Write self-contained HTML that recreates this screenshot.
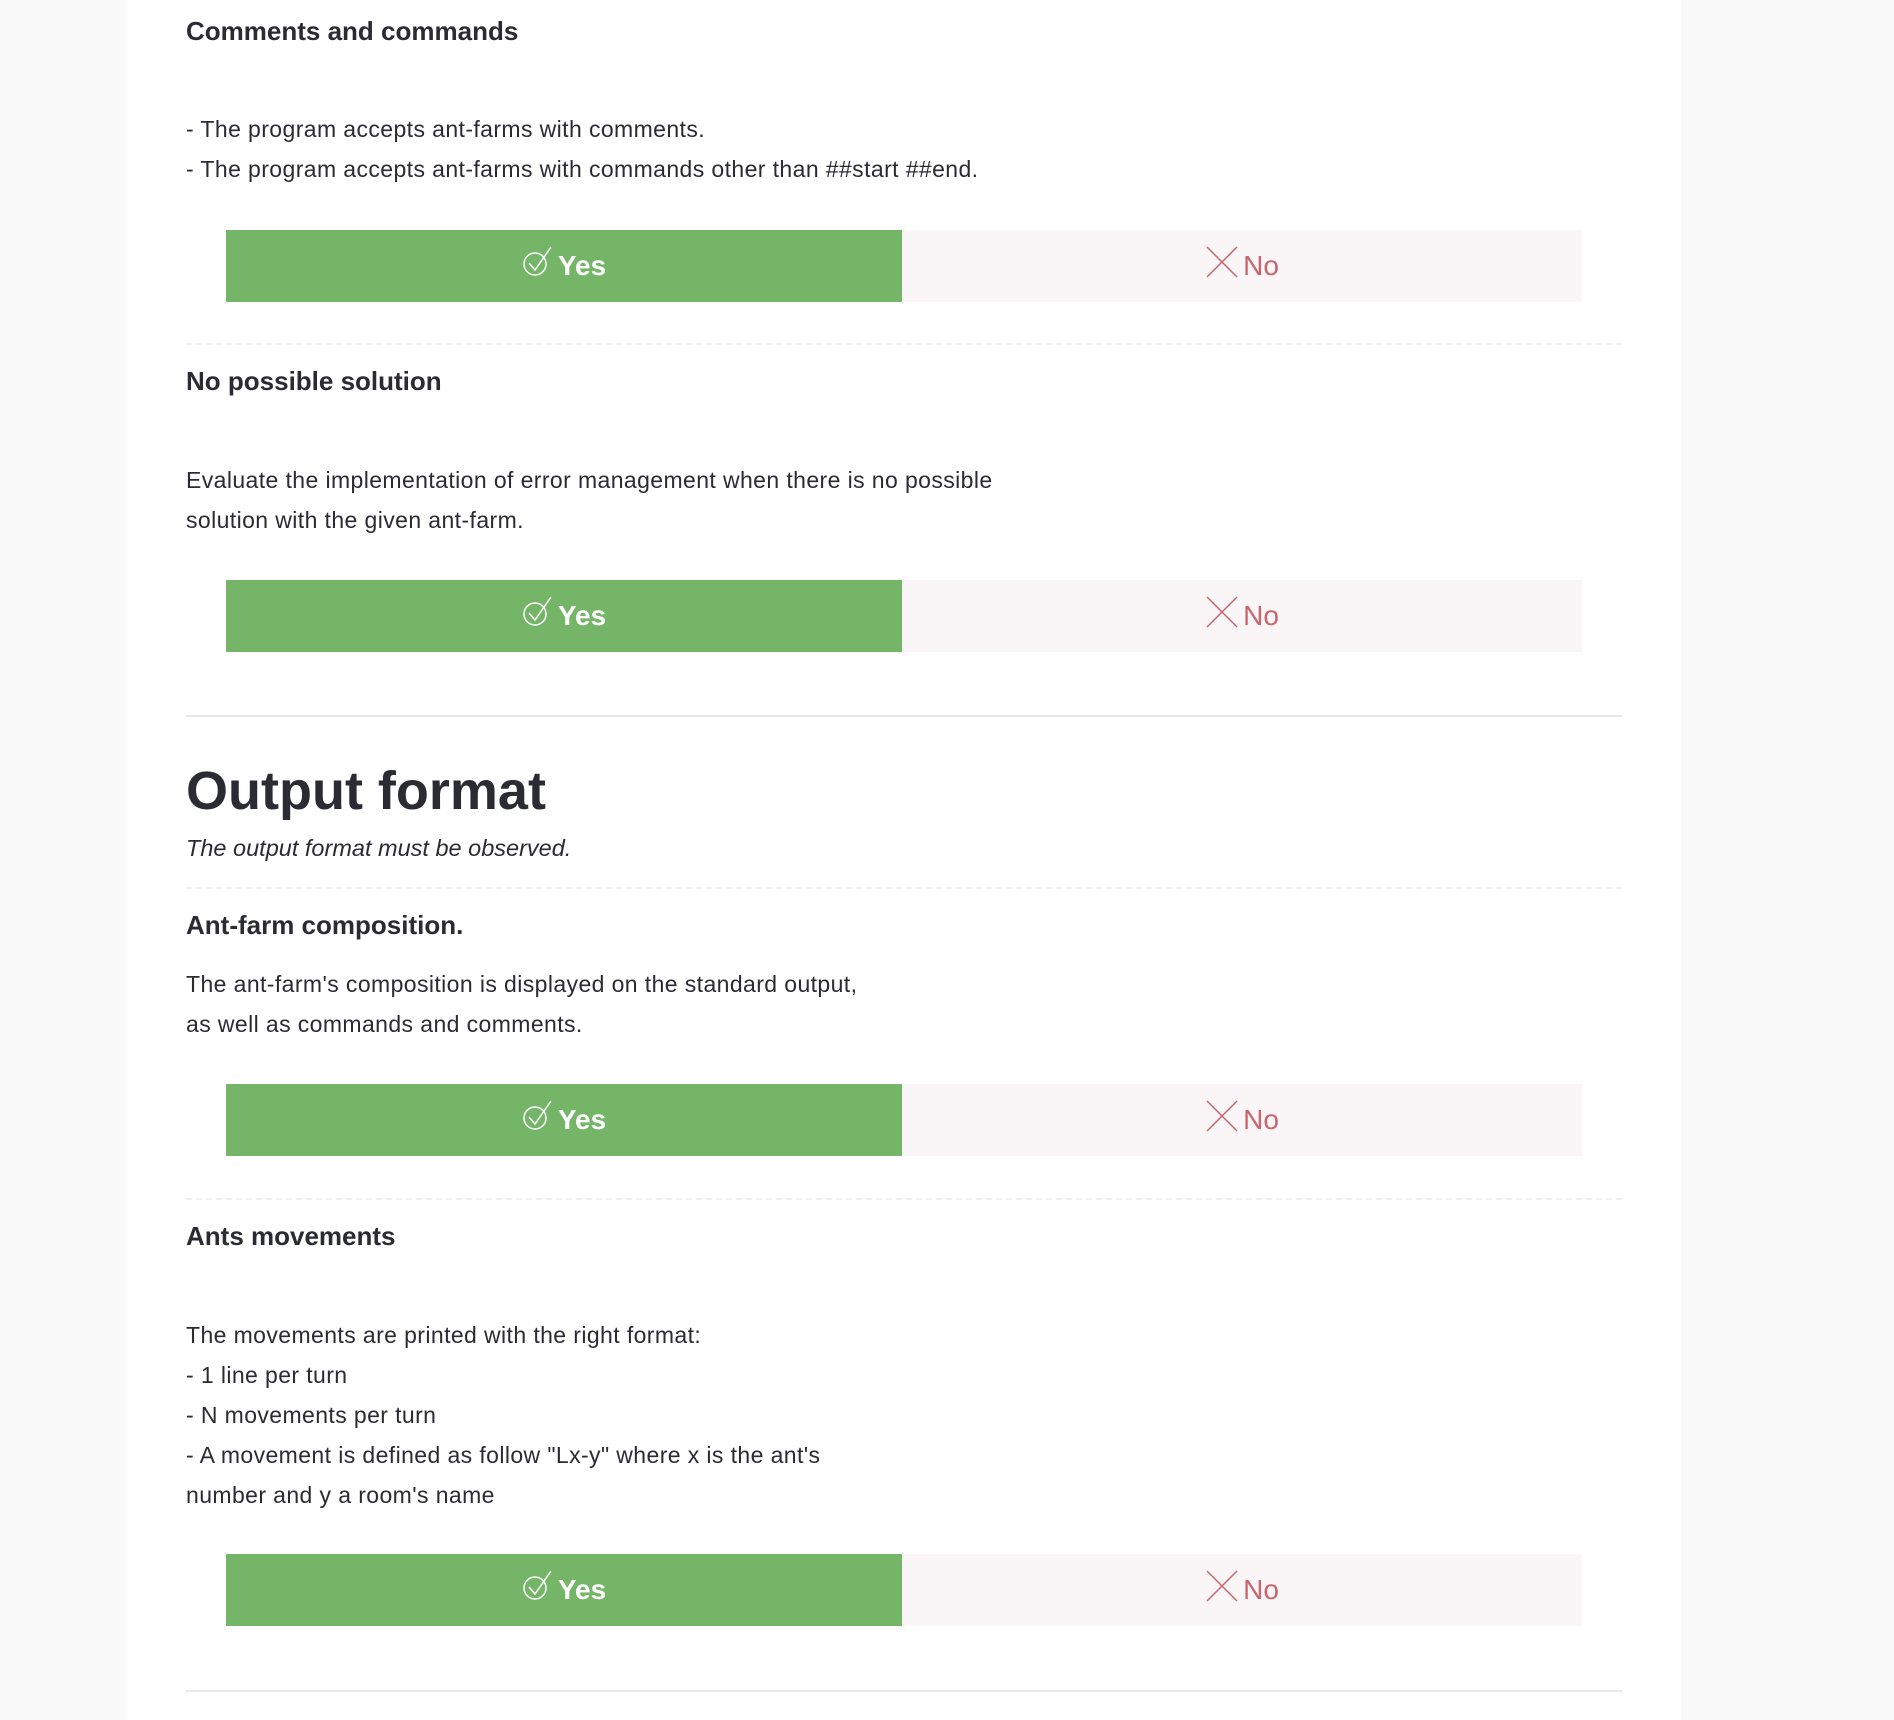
<!DOCTYPE html>
<html><head><meta charset="utf-8"><style>
html,body{margin:0;padding:0}
body{width:1894px;height:1720px;background:#f9f9f9;position:relative;overflow:hidden;font-family:"Liberation Sans",sans-serif;color:#2b2b33}
.page{position:absolute;left:126px;top:0;width:1555px;height:1720px;background:#fff}
.a{position:absolute;left:186px;white-space:nowrap}
.h{font-weight:bold;font-size:26px;line-height:30px}
.t{font-size:23px;letter-spacing:0.4px;line-height:40px;color:#2b2b33}
.dash{position:absolute;left:186px;width:1436px;height:0;border-top:2px dashed #efefef}
.solid{position:absolute;left:186px;width:1436px;height:2px;background:#e8e8e8}
.btn{position:absolute;left:226px;width:1356px;height:72px}
.yes{position:absolute;left:0;top:0;width:676px;height:72px;background:#75b568;color:#fff;font-size:28px;display:flex;align-items:center;justify-content:center}
.no{position:absolute;left:676px;top:0;width:680px;height:72px;background:#faf6f7;color:#c9656d;font-size:28px;display:flex;align-items:center;justify-content:center}
.yes svg,.no svg{margin-right:4px;margin-top:-8px}
</style></head><body>
<div class="page"></div>

<div class="a h" style="top:16px">Comments and commands</div>
<div class="a t" style="top:109px">- The program accepts ant-farms with comments.<br>- The program accepts ant-farms with commands other than ##start ##end.</div>
<div class="btn" style="top:230px"><div class="yes"><svg width="32" height="34" viewBox="0 0 32 34"><circle cx="13" cy="19" r="11" fill="none" stroke="#fff" stroke-width="1.5"/><path d="M7 18 L13 25 L29 2" fill="none" stroke="#fff" stroke-width="1.5"/></svg><b>Yes</b></div><div class="no"><svg width="34" height="34" viewBox="0 0 34 34"><path d="M2 2 L32 32 M32 2 L2 32" stroke="#c9656d" stroke-width="1.5"/></svg>No</div></div>
<div class="dash" style="top:343px"></div>

<div class="a h" style="top:366px">No possible solution</div>
<div class="a t" style="top:460px">Evaluate the implementation of error management when there is no possible<br>solution with the given ant-farm.</div>
<div class="btn" style="top:580px"><div class="yes"><svg width="32" height="34" viewBox="0 0 32 34"><circle cx="13" cy="19" r="11" fill="none" stroke="#fff" stroke-width="1.5"/><path d="M7 18 L13 25 L29 2" fill="none" stroke="#fff" stroke-width="1.5"/></svg><b>Yes</b></div><div class="no"><svg width="34" height="34" viewBox="0 0 34 34"><path d="M2 2 L32 32 M32 2 L2 32" stroke="#c9656d" stroke-width="1.5"/></svg>No</div></div>
<div class="solid" style="top:715px"></div>

<div class="a" style="top:760px;font-size:54px;font-weight:bold;line-height:62px">Output format</div>
<div class="a" style="top:833px;font-size:23.5px;font-style:italic;line-height:30px">The output format must be observed.</div>
<div class="dash" style="top:887px"></div>

<div class="a h" style="top:910px">Ant-farm composition.</div>
<div class="a t" style="top:964px">The ant-farm's composition is displayed on the standard output,<br>as well as commands and comments.</div>
<div class="btn" style="top:1084px"><div class="yes"><svg width="32" height="34" viewBox="0 0 32 34"><circle cx="13" cy="19" r="11" fill="none" stroke="#fff" stroke-width="1.5"/><path d="M7 18 L13 25 L29 2" fill="none" stroke="#fff" stroke-width="1.5"/></svg><b>Yes</b></div><div class="no"><svg width="34" height="34" viewBox="0 0 34 34"><path d="M2 2 L32 32 M32 2 L2 32" stroke="#c9656d" stroke-width="1.5"/></svg>No</div></div>
<div class="dash" style="top:1198px"></div>

<div class="a h" style="top:1221px">Ants movements</div>
<div class="a t" style="top:1315px">The movements are printed with the right format:<br>- 1 line per turn<br>- N movements per turn<br>- A movement is defined as follow "Lx-y" where x is the ant's<br>number and y a room's name</div>
<div class="btn" style="top:1554px"><div class="yes"><svg width="32" height="34" viewBox="0 0 32 34"><circle cx="13" cy="19" r="11" fill="none" stroke="#fff" stroke-width="1.5"/><path d="M7 18 L13 25 L29 2" fill="none" stroke="#fff" stroke-width="1.5"/></svg><b>Yes</b></div><div class="no"><svg width="34" height="34" viewBox="0 0 34 34"><path d="M2 2 L32 32 M32 2 L2 32" stroke="#c9656d" stroke-width="1.5"/></svg>No</div></div>
<div class="solid" style="top:1690px"></div>
</body></html>
